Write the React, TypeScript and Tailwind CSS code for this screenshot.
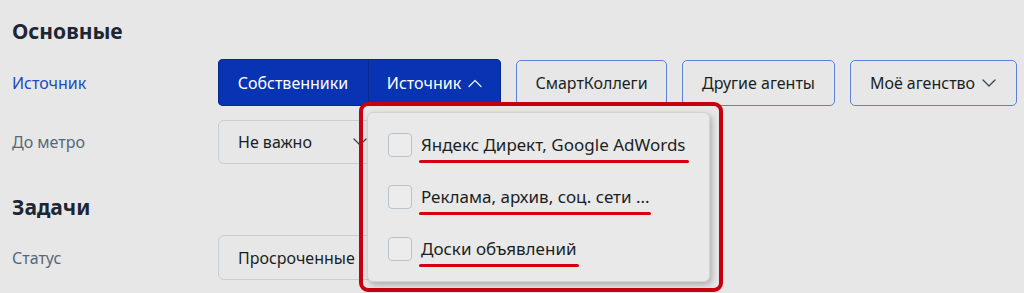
import React from "react";

const Chevron = ({ up = false, className = "" }: { up?: boolean; className?: string }) => (
  <svg width="16" height="10" viewBox="0 0 16 10" className={className} fill="none">
    <path
      d={up ? "M2 8.5 L8 2.5 L14 8.5" : "M2 2 L8 8 L14 2"}
      stroke="currentColor"
      strokeWidth="1.3"
      strokeLinecap="round"
      strokeLinejoin="round"
    />
  </svg>
);

const Item = ({ text, underline }: { text: string; underline: number }) => (
  <div className="flex h-[24px] items-center">
    <div className="h-[24px] w-[24px] shrink-0 rounded-[4px] border border-[#b9c3cc] bg-[#ececec]" />
    <div className="relative ml-[9px]">
      <span className="text-[17px] leading-[24px] text-[#1b1f24]">{text}</span>
      <div
        className="absolute left-[-2px] top-[27px] h-[3px] rounded-full bg-[#d40012]"
        style={{ width: underline }}
      />
    </div>
  </div>
);

export default function App() {
  return (
    <div
      className="relative h-[293px] w-[1024px] overflow-hidden bg-[#e7e7e7] pl-[12px] pt-[18px]"
      style={{ fontFamily: '"Noto Sans", "Open Sans", sans-serif' }}
    >
      <h2 className="h-[26px] text-[21px] font-bold leading-[26px] text-[#1d2633]">Основные</h2>

      <div className="mt-[15px] flex h-[47px] items-center">
        <div className="w-[206px] text-[16px] text-[#1a4bc0]">Источник</div>
        <div className="flex h-[47px] overflow-hidden rounded-[5px] bg-[#0833b3] text-[16px] text-white shadow-[inset_0_0_0_1px_#0a2a90]">
          <div className="flex w-[150px] items-center justify-center">Собственники</div>
          <div className="flex w-[133px] items-center justify-center gap-[6px] border-l border-[#0a2a8c]">
            Источник
            <Chevron up className="text-white/90" />
          </div>
        </div>
        <div className="ml-[15px] flex h-[46px] w-[151px] items-center justify-center rounded-[5px] border border-[#5b82d6] text-[16px] text-[#1b1f24]">
          СмартКоллеги
        </div>
        <div className="ml-[15px] flex h-[46px] w-[153px] items-center justify-center rounded-[5px] border border-[#5b82d6] text-[16px] text-[#1b1f24]">
          Другие агенты
        </div>
        <div className="ml-[15px] flex h-[46px] w-[167px] items-center justify-center gap-[6px] rounded-[5px] border border-[#5b82d6] text-[16px] text-[#1b1f24]">
          Моё агенство
          <Chevron className="text-[#3b4452]" />
        </div>
      </div>

      <div className="mt-[14px] flex h-[44px] items-center">
        <div className="w-[206px] text-[16px] text-[#56677a]">До метро</div>
        <div className="flex h-[44px] w-[170px] items-center rounded-[6px] border border-[#c3ced7] pl-[19px] text-[16px] text-[#1b1f24]">
          Не важно
          <Chevron className="ml-[40px] text-[#3b4452]" />
        </div>
      </div>

      <h2 className="mt-[30px] h-[26px] text-[21px] font-bold leading-[26px] text-[#1d2633]">Задачи</h2>

      <div className="mt-[15px] flex h-[45px] items-center">
        <div className="w-[206px] text-[16px] text-[#56677a]">Статус</div>
        <div className="flex h-[45px] w-[170px] items-center rounded-[6px] border border-[#c3ced7] pl-[19px] text-[16px] text-[#1b1f24]">
          Просроченные
        </div>
      </div>

      <div className="absolute left-[359px] top-[102px] h-[190px] w-[364px] rounded-[9px] border-[4px] border-[#c8000e] p-[6px] pl-[4px] pt-[6px]">
        <div className="flex h-[170px] w-[343px] flex-col gap-[28px] rounded-[6px] border border-[#d3d3d3] bg-[#e9e9e9] pl-[20px] pt-[20px] shadow-[2px_3px_6px_rgba(0,0,0,0.25)]">
          <Item text="Яндекс Директ, Google AdWords" underline={270} />
          <Item text="Реклама, архив, соц. сети ..." underline={232} />
          <Item text="Доски объявлений" underline={160} />
        </div>
      </div>
    </div>
  );
}
